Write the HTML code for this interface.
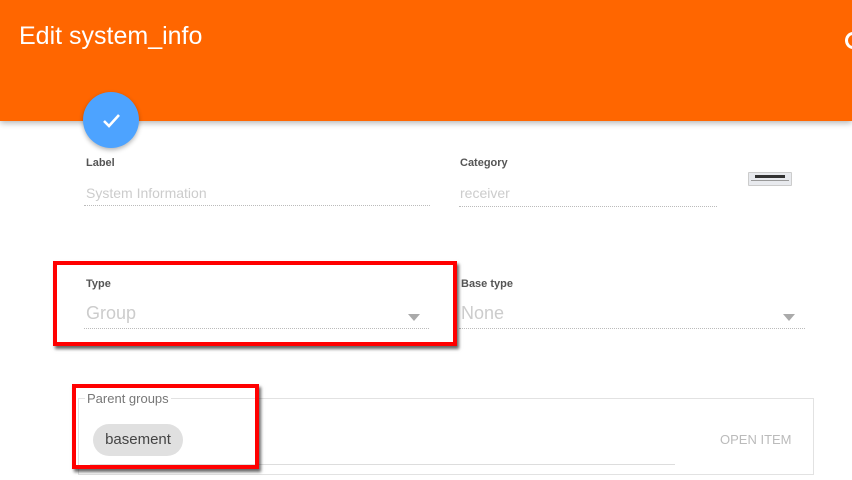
<!DOCTYPE html>
<html><head><style>
body{margin:0;width:852px;height:480px;overflow:hidden;background:#fff;font-family:"Liberation Sans",sans-serif;position:relative}
.hdr{position:absolute;left:0;top:0;width:852px;height:121px;background:#ff6600;box-shadow:0 2px 6px rgba(0,0,0,.3)}
.hdr h1{position:absolute;left:19px;top:22px;margin:0;font-weight:normal;font-size:25px;color:#fff}
.a{position:absolute}
.lab{font-size:11px;color:#555;font-weight:bold}
.val{color:#ccc}
.dot{border-bottom:1px dotted #bbb}
.red{position:absolute;border:4px solid #f00;box-shadow:2px 3px 3px rgba(0,0,0,.6)}
</style></head><body>
<div class="hdr"><h1>Edit system_info</h1>
<div class="a" style="left:845px;top:32px;width:10px;height:11px;border:3px solid #fff;border-radius:50%"></div></div>
<div class="a" style="left:83px;top:92px;width:56px;height:56px;border-radius:50%;background:#4da3ff;box-shadow:0 2px 5px rgba(0,0,0,.3)">
<svg width="56" height="56"><path d="M21 29 L26 34 L36 23" stroke="#fff" stroke-width="2.6" fill="none"/></svg></div>
<div class="a lab" style="left:86px;top:157px">Label</div>
<div class="a val" style="left:86px;top:185px;font-size:14px">System Information</div>
<div class="a dot" style="left:84px;top:205px;width:346px"></div>
<div class="a lab" style="left:460px;top:157px">Category</div>
<div class="a val" style="left:460px;top:185px;font-size:14px">receiver</div>
<div class="a dot" style="left:459px;top:206px;width:258px"></div>
<div class="a" style="left:748px;top:172px;width:42px;height:12px;background:#e8eaee;border:1px solid #ccc;border-radius:1px"><div style="margin:2px 6px;height:3px;background:#333"></div><div style="margin:2px 2px 0;height:1px;background:#999"></div></div>
<div class="a lab" style="left:86px;top:278px">Type</div>
<div class="a val" style="left:86px;top:303px;font-size:18px">Group</div>
<div class="a" style="left:408px;top:314px;border:6px solid transparent;border-top:7px solid #aaa"></div>
<div class="a dot" style="left:84px;top:328px;width:345px"></div>
<div class="a lab" style="left:461px;top:278px">Base type</div>
<div class="a val" style="left:461px;top:303px;font-size:18px">None</div>
<div class="a" style="left:783px;top:314px;border:6px solid transparent;border-top:7px solid #aaa"></div>
<div class="a dot" style="left:459px;top:328px;width:346px"></div>
<div class="a" style="left:78px;top:398px;width:734px;height:75px;border:1px solid #e2e2e2"></div>
<div class="a" style="left:85px;top:391px;background:#fff;padding:0 2px;font-size:13px;color:#777">Parent groups</div>
<div class="a" style="left:93px;top:424px;width:90px;height:32px;border-radius:16px;background:#e0e0e0;font-size:15px;color:#444;line-height:32px;text-align:center">basement</div>
<div class="a" style="left:90px;top:464px;width:585px;border-top:1px solid #ddd"></div>
<div class="a" style="left:720px;top:432px;font-size:13px;color:#bbb">OPEN ITEM</div>
<div class="red" style="left:53px;top:261px;width:396px;height:77px"></div>
<div class="red" style="left:72px;top:384px;width:179px;height:77px"></div>
</body></html>
